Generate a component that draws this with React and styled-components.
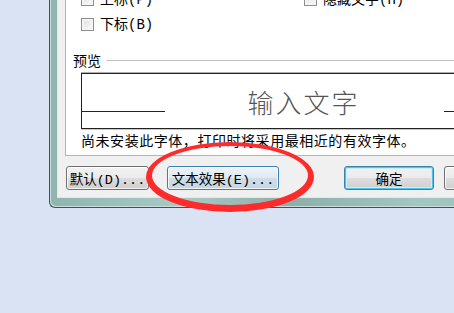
import React from 'react';
import styled, { createGlobalStyle } from 'styled-components';

const GlobalStyle = createGlobalStyle`
  html, body {
    margin: 0;
    padding: 0;
    background: #dae3f3;
    overflow: hidden;
  }
`;

const uiFont = `"Liberation Mono", "Noto Sans CJK SC", monospace`;

const Page = styled.div`
  width: 454px;
  height: 313px;
  overflow: hidden;
  position: relative;
  background: #dae3f3;
  font-family: ${uiFont};
  color: #000;
`;

const Window = styled.div`
  width: 520px;
  margin-top: -13px;
  margin-left: 49px;
  padding: 0 0 9px 7px;
  border-left: 1px solid #3f5352;
  border-bottom: 1px solid #3f5352;
  border-bottom-left-radius: 6px;
  background: linear-gradient(90deg, #8fb4af 0%, #a9cbc6 25%, #8cafaa 45%, #a4c7c2 70%, #93b8b3 100%);
  box-shadow: inset 1px -1px 0 #c9dedb;
`;

const Client = styled.div`
  background: #f0f0f0;
  padding-left: 7px;
  border-left: 1px solid #dfe9e8;
  border-bottom: 1px solid #dfe9e8;
`;

const TabPage = styled.div`
  background: #fff;
  border-left: 1px solid #b4b4b4;
  border-bottom: 1px solid #b4b4b4;
  padding: 0 0 6px 7px;
`;

const OptionGrid = styled.div`
  display: grid;
  grid-template-columns: 223px 1fr;
  grid-auto-rows: 25px;
  padding-left: 8px;
`;

const Option = styled.label`
  display: flex;
  align-items: center;
  gap: 6px;
  font-size: 14px;
  line-height: 1;
`;

const Check = styled.span`
  width: 13px;
  height: 13px;
  box-sizing: border-box;
  border: 1px solid #8e8f8f;
  background: linear-gradient(135deg, #dadada 0%, #f0f0f0 60%, #ffffff 100%);
  box-shadow: inset 0 0 0 2px #f4f4f4;
`;

const PreviewHeader = styled.div`
  display: flex;
  align-items: center;
  gap: 6px;
  height: 18px;
  margin-top: 14px;
  font-size: 14px;
`;

const Rule = styled.div`
  flex: 1;
  height: 0;
  border-top: 1px solid #bfbfbf;
`;

const PreviewBox = styled.div`
  display: grid;
  grid-template-columns: 83px 1fr 84px;
  align-items: end;
  width: 446px;
  height: 54px;
  margin: 4px 0 0 8px;
  border: 1px solid #222;
  box-shadow: 0 -1px 0 #b0b0b0, 0 1px 0 #c8c8c8;
`;

const Baseline = styled.div`
  height: 1px;
  margin-bottom: 16px;
  background: #222;
`;

const Sample = styled.div`
  align-self: center;
  text-align: center;
  font-family: "Noto Sans CJK SC", sans-serif;
  font-weight: 300;
  font-size: 26px;
  letter-spacing: 2px;
  color: #555;
  line-height: 1;
  padding: 2px 2px 0 0;
`;

const Note = styled.div`
  margin: 2px 0 0 8px;
  font-family: "Noto Sans CJK SC", sans-serif;
  font-size: 14px;
  letter-spacing: 0.55px;
  line-height: 18px;
`;

const ButtonRow = styled.div`
  display: flex;
  padding: 10px 0 7px 1px;
`;

const Button = styled.div`
  width: ${p => p.$w}px;
  height: 24px;
  margin-left: ${p => p.$ml || 0}px;
  box-sizing: border-box;
  border-radius: 3px;
  display: flex;
  align-items: center;
  justify-content: center;
  font-size: 13.5px;
  white-space: nowrap;
  flex-shrink: 0;
  border: 1px solid ${p => (p.$kind === 'normal' ? '#707070' : '#3c7fb1')};
  background: ${p =>
    p.$kind === 'hover'
      ? 'linear-gradient(#edf3f8 0%, #e0eaf2 50%, #cfdde8 51%, #c5d7e4 100%)'
      : 'linear-gradient(#f2f2f2 0%, #ebebeb 50%, #dddddd 51%, #cfcfcf 100%)'};
  box-shadow: ${p =>
    p.$kind === 'default'
      ? 'inset 0 0 0 1px #4fc3f0, inset 0 0 0 2px #c8eefb'
      : 'inset 0 0 0 1px rgba(255,255,255,0.75)'};
`;

const Marker = styled.svg`
  position: absolute;
  left: 143px;
  top: 140px;
  width: 175px;
  height: 75px;
  pointer-events: none;
`;

// hand-drawn ring: outer and inner ellipse, inner raised so the bottom stroke is heavier
const ring =
  'M3 37 A84 35 0 1 0 171 37 A84 35 0 1 0 3 37 Z ' +
  'M9 35.5 A78 29.5 0 1 1 165 35.5 A78 29.5 0 1 1 9 35.5 Z';

export default function App() {
  return (
    <>
      <GlobalStyle />
      <Page>
        <Window>
          <Client>
            <TabPage>
              <OptionGrid>
                <Option><Check />上标(P)</Option>
                <Option><Check />隐藏文字(H)</Option>
                <Option><Check />下标(B)</Option>
              </OptionGrid>
              <PreviewHeader>
                预览
                <Rule />
              </PreviewHeader>
              <PreviewBox>
                <Baseline />
                <Sample>输入文字</Sample>
                <Baseline />
              </PreviewBox>
              <Note>尚未安装此字体，打印时将采用最相近的有效字体。</Note>
            </TabPage>
            <ButtonRow>
              <Button $w={83} $kind="normal">默认(D)...</Button>
              <Button $w={112} $ml={18} $kind="hover">文本效果(E)...</Button>
              <Button $w={90} $ml={65} $kind="default">确定</Button>
              <Button $w={90} $ml={10} $kind="normal">取消</Button>
            </ButtonRow>
          </Client>
        </Window>
        <Marker viewBox="0 0 175 75">
          <path d={ring} fill="#ff2b2b" fillRule="evenodd" />
        </Marker>
      </Page>
    </>
  );
}
